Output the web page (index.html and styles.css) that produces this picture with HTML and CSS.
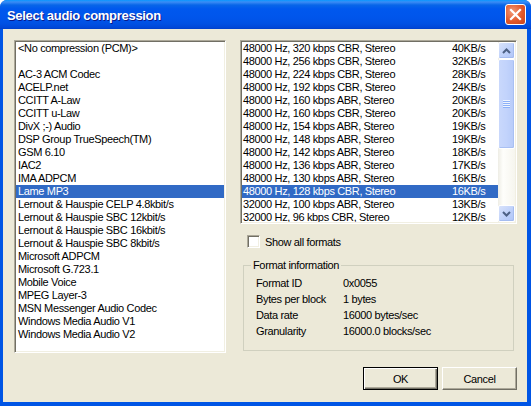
FILE: index.html
```html
<!DOCTYPE html>
<html lang="en">
<head>
    <meta charset="UTF-8">
    <title>Select audio compression</title>
    <link rel="stylesheet" href="styles.css">
</head>
<body>
    <div class="window">
        <div class="titlebar">
            <span class="title">Select audio compression</span>
            <button class="close" aria-label="Close">
                <svg width="13" height="13" viewBox="0 0 13 13">
                    <path d="M2 2 L11 11 M11 2 L2 11" stroke="#fff" stroke-width="2.2" stroke-linecap="square"/>
                </svg>
            </button>
        </div>

        <div class="client">
            <div class="listbox codecs">
                <div class="item">&lt;No compression (PCM)&gt;</div>
                <div class="item"></div>
                <div class="item">AC-3 ACM Codec</div>
                <div class="item">ACELP.net</div>
                <div class="item">CCITT A-Law</div>
                <div class="item">CCITT u-Law</div>
                <div class="item">DivX ;-) Audio</div>
                <div class="item">DSP Group TrueSpeech(TM)</div>
                <div class="item">GSM 6.10</div>
                <div class="item">IAC2</div>
                <div class="item">IMA ADPCM</div>
                <div class="item selected">Lame MP3</div>
                <div class="item">Lernout &amp; Hauspie CELP 4.8kbit/s</div>
                <div class="item">Lernout &amp; Hauspie SBC 12kbit/s</div>
                <div class="item">Lernout &amp; Hauspie SBC 16kbit/s</div>
                <div class="item">Lernout &amp; Hauspie SBC 8kbit/s</div>
                <div class="item">Microsoft ADPCM</div>
                <div class="item">Microsoft G.723.1</div>
                <div class="item">Mobile Voice</div>
                <div class="item">MPEG Layer-3</div>
                <div class="item">MSN Messenger Audio Codec</div>
                <div class="item">Windows Media Audio V1</div>
                <div class="item">Windows Media Audio V2</div>
            </div>

            <div class="side">
                <div class="listbox formats">
                    <div class="rows" id="format-rows"></div>
                    <div class="scrollbar">
                        <div class="sb-btn">
                            <svg width="9" height="6" viewBox="0 0 9 6"><path d="M1 5 L4.5 1.5 L8 5" fill="none" stroke="#4d6185" stroke-width="2"/></svg>
                        </div>
                        <div class="sb-thumb">
                            <div class="grip"></div>
                        </div>
                        <div class="sb-track"></div>
                        <div class="sb-btn">
                            <svg width="9" height="6" viewBox="0 0 9 6"><path d="M1 1 L4.5 4.5 L8 1" fill="none" stroke="#4d6185" stroke-width="2"/></svg>
                        </div>
                    </div>
                </div>

                <label class="check">
                    <span class="box"></span>
                    Show all formats
                </label>

                <fieldset class="info">
                    <legend>Format information</legend>
                    <div class="info-grid">
                        <span>Format ID</span><span>0x0055</span>
                        <span>Bytes per block</span><span>1 bytes</span>
                        <span>Data rate</span><span>16000 bytes/sec</span>
                        <span>Granularity</span><span>16000.0 blocks/sec</span>
                    </div>
                </fieldset>

                <div class="buttons">
                    <button class="btn default">OK</button>
                    <button class="btn">Cancel</button>
                </div>
            </div>
        </div>
    </div>

    <script>
        const formats = [
            ["48000 Hz, 320 kbps CBR, Stereo", "40KB/s"],
            ["48000 Hz, 256 kbps CBR, Stereo", "32KB/s"],
            ["48000 Hz, 224 kbps CBR, Stereo", "28KB/s"],
            ["48000 Hz, 192 kbps CBR, Stereo", "24KB/s"],
            ["48000 Hz, 160 kbps ABR, Stereo", "20KB/s"],
            ["48000 Hz, 160 kbps CBR, Stereo", "20KB/s"],
            ["48000 Hz, 154 kbps ABR, Stereo", "19KB/s"],
            ["48000 Hz, 148 kbps ABR, Stereo", "19KB/s"],
            ["48000 Hz, 142 kbps ABR, Stereo", "18KB/s"],
            ["48000 Hz, 136 kbps ABR, Stereo", "17KB/s"],
            ["48000 Hz, 130 kbps ABR, Stereo", "16KB/s"],
            ["48000 Hz, 128 kbps CBR, Stereo", "16KB/s"],
            ["32000 Hz, 100 kbps ABR, Stereo", "13KB/s"],
            ["32000 Hz, 96 kbps CBR, Stereo", "12KB/s"]
        ];
        const selectedFormat = 11;

        const rowsElement = document.getElementById("format-rows");

        formats.forEach((format, index) => {
            const row = document.createElement("div");
            row.className = "item format";
            if (index === selectedFormat) {
                row.classList.add("selected");
            }
            const name = document.createElement("span");
            name.textContent = format[0];
            const rate = document.createElement("span");
            rate.textContent = format[1];
            row.appendChild(name);
            row.appendChild(rate);
            rowsElement.appendChild(row);
        });
    </script>
</body>
</html>
```

FILE: styles.css
```css
html, body {
    margin: 0;
    padding: 0;
    background-color: #fff;
}

body {
    width: 531px;
    height: 406px;
    overflow: hidden;
    font-family: "Liberation Sans", Arial, sans-serif;
    font-size: 11px;
    letter-spacing: -0.35px;
    color: #000;
}

.window {
    width: 531px;
    height: 406px;
    display: flex;
    flex-direction: column;
    background-color: #0055e5;
    border-radius: 7px 7px 0 0;
    overflow: hidden;
}

/* title bar */

.titlebar {
    height: 29px;
    flex: none;
    display: flex;
    align-items: center;
    justify-content: space-between;
    padding: 0 5px 0 7px;
    background: linear-gradient(#0997ff 0, #3b8cf5 2px, #0866e8 5px, #0058ee 9px, #0055eb 18px, #0050e2 24px, #0046d6 28px, #003dc4 29px);
}

.title {
    color: #fff;
    font-weight: bold;
    font-size: 13px;
    letter-spacing: -0.3px;
    text-shadow: 1px 1px 0 #0a1a8a;
    padding-top: 1px;
}

.close {
    width: 21px;
    height: 21px;
    padding: 0;
    border: 1px solid #fff;
    border-radius: 3px;
    background: radial-gradient(circle at 35% 35%, #f29a78 0, #e2582b 55%, #c9441b 100%);
    display: flex;
    align-items: center;
    justify-content: center;
}

/* client area */

.client {
    flex: 1;
    display: flex;
    gap: 14px;
    margin: 0 4px 4px 3px;
    padding: 11px 10px 0 11px;
    background-color: #ece9d8;
}

.listbox {
    background-color: #fff;
    border-top: 1px solid #aca899;
    border-left: 1px solid #aca899;
    border-right: 1px solid #fff;
    border-bottom: 1px solid #fff;
    box-shadow: inset 1px 1px 0 #716f64, inset -1px -1px 0 #f1efe2;
    padding: 1px;
    overflow: hidden;
}

.codecs {
    width: 212px;
    height: 313px;
    box-sizing: border-box;
    flex: none;
}

.item {
    height: 13px;
    line-height: 13px;
    padding-left: 2px;
    white-space: nowrap;
}

.item.selected {
    background-color: #316ac5;
    color: #fff;
}

.side {
    width: 277px;
    flex: none;
    display: flex;
    flex-direction: column;
}

.formats {
    height: 184px;
    box-sizing: border-box;
    display: flex;
}

.rows {
    flex: 1;
    overflow: hidden;
}

.format {
    display: grid;
    grid-template-columns: 209px auto;
    padding-left: 1px;
}

/* scrollbar */

.scrollbar {
    width: 17px;
    flex: none;
    display: flex;
    flex-direction: column;
    background: linear-gradient(90deg, #eeede5, #fefefb 30%, #f6f5ee);
}

.sb-btn {
    height: 17px;
    box-sizing: border-box;
    border: 1px solid #fff;
    border-radius: 2px;
    background: linear-gradient(135deg, #d9e3fb, #bccffa 60%, #b1c6f7);
    box-shadow: inset -1px -1px 0 #a5bcf0;
    display: flex;
    align-items: center;
    justify-content: center;
}

.sb-thumb {
    height: 90px;
    box-sizing: border-box;
    border: 1px solid #fff;
    border-radius: 2px;
    background: linear-gradient(90deg, #c9d8fc, #c2d3fc 50%, #b7cbf9);
    box-shadow: inset -1px -1px 0 #a9c0f3;
    display: flex;
    align-items: center;
    justify-content: center;
}

.grip {
    width: 7px;
    height: 8px;
    background: repeating-linear-gradient(#eef4fe 0, #eef4fe 1px, #8cb0f8 1px, #8cb0f8 2px);
}

.sb-track {
    flex: 1;
}

/* checkbox */

.check {
    display: flex;
    align-items: center;
    gap: 5px;
    margin: 11px 0 0 7px;
    height: 13px;
}

.box {
    width: 13px;
    height: 13px;
    box-sizing: border-box;
    background-color: #fff;
    border-top: 1px solid #aca899;
    border-left: 1px solid #aca899;
    border-right: 1px solid #fff;
    border-bottom: 1px solid #fff;
    box-shadow: inset 1px 1px 0 #716f64, inset -1px -1px 0 #f1efe2;
}

/* group box */

.info {
    margin: 11px 3px 0 3px;
    padding: 0 6px 11px 7px;
    border: 1px solid #d0d0bf;
    min-width: 0;
}

.info legend {
    padding: 0 2px;
    line-height: 13px;
}

.info-grid {
    display: grid;
    grid-template-columns: 87px auto;
    grid-auto-rows: 16px;
    align-items: center;
    padding: 3px 0 0 5px;
}

/* buttons */

.buttons {
    display: flex;
    justify-content: flex-end;
    gap: 4px;
    margin-top: 16px;
}

.btn {
    width: 75px;
    height: 23px;
    padding: 0;
    font-family: inherit;
    font-size: 11px;
    letter-spacing: inherit;
    color: #000;
    background-color: #ece9d8;
    border-top: 1px solid #fff;
    border-left: 1px solid #fff;
    border-right: 1px solid #716f64;
    border-bottom: 1px solid #716f64;
    box-shadow: inset -1px -1px 0 #aca899;
}

.btn.default {
    border: 1px solid #000;
    box-shadow: inset 1px 1px 0 #fff, inset -1px -1px 0 #716f64, inset -2px -2px 0 #aca899;
}
```
